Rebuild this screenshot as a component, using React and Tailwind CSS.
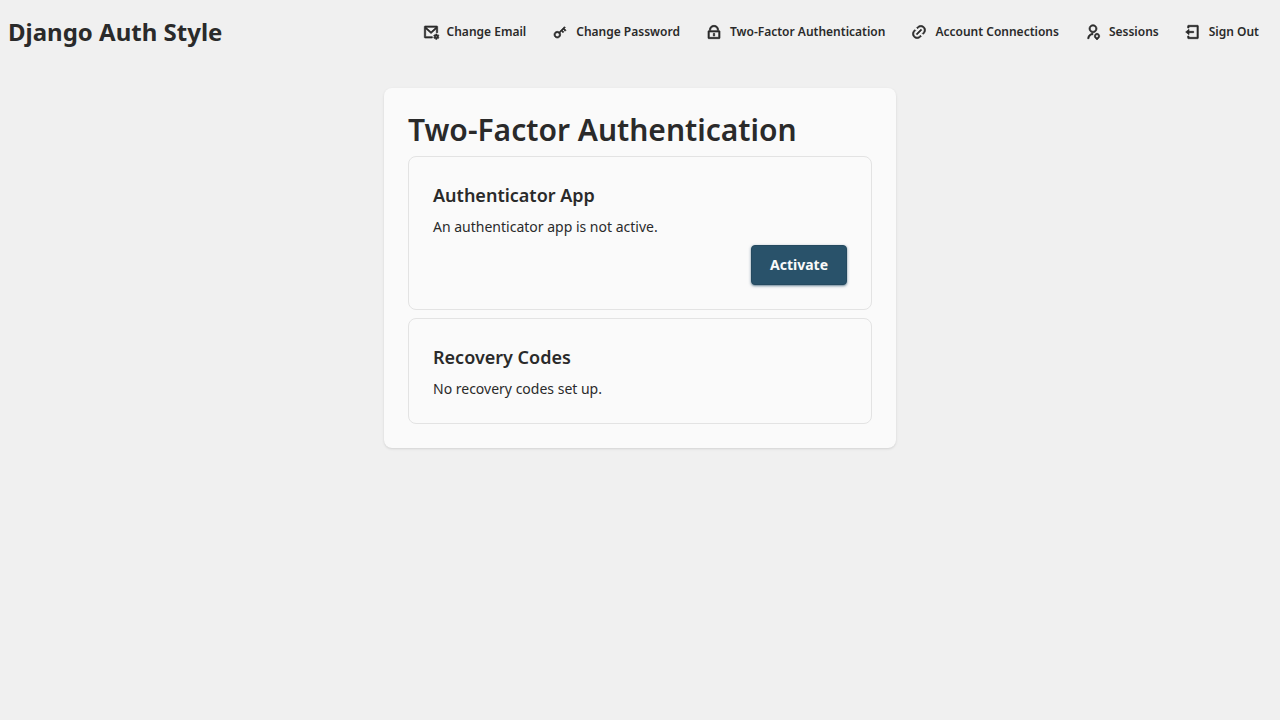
import {
  RiMailSettingsLine,
  RiKey2Line,
  RiLockLine,
  RiLink,
  RiUserLocationLine,
  RiLogoutBoxLine,
} from "react-icons/ri";

const links = [
  { label: "Change Email", Icon: RiMailSettingsLine },
  { label: "Change Password", Icon: RiKey2Line },
  { label: "Two-Factor Authentication", Icon: RiLockLine },
  { label: "Account Connections", Icon: RiLink },
  { label: "Sessions", Icon: RiUserLocationLine },
  { label: "Sign Out", Icon: RiLogoutBoxLine },
];

function Navbar() {
  return (
    <header className="flex min-h-16 flex-wrap items-center justify-between px-2">
      <a href="#home" className="text-2xl font-bold">
        Django Auth Style
      </a>
      <nav className="flex flex-wrap items-center">
        {links.map(({ label, Icon }) => (
          <a
            key={label}
            href="#account"
            className="flex h-8 items-center gap-2 rounded border border-transparent px-3 text-xs font-semibold"
          >
            <Icon className="size-4 overflow-visible stroke-current stroke-1" aria-hidden="true" />
            {label}
          </a>
        ))}
      </nav>
    </header>
  );
}

function Panel({ title, text, children }) {
  return (
    <section className="flex flex-col gap-2 rounded-lg border border-[#e3e3e3] p-6">
      <h2 className="text-lg leading-7 font-semibold">{title}</h2>
      <p className="text-sm leading-5">{text}</p>
      {children}
    </section>
  );
}

export default function App() {
  return (
    <div className="min-h-screen bg-[#f0f0f0] font-['Noto_Sans',sans-serif] text-[#2a2a2a]">
      <Navbar />
      <main className="px-4 py-6">
        <div className="mx-auto flex max-w-lg flex-col gap-2 rounded-lg bg-[#fafafa] p-6 shadow-sm">
          <h1 className="text-3xl font-semibold">Two-Factor Authentication</h1>
          <Panel title="Authenticator App" text="An authenticator app is not active.">
            <div className="flex justify-end">
              <button
                type="button"
                className="h-10 min-w-24 rounded border border-[#254a60] bg-[#29526a] px-4 text-sm font-bold text-[#fafafa] shadow-sm shadow-[#29526a]/60"
              >
                Activate
              </button>
            </div>
          </Panel>
          <Panel title="Recovery Codes" text="No recovery codes set up." />
        </div>
      </main>
    </div>
  );
}
